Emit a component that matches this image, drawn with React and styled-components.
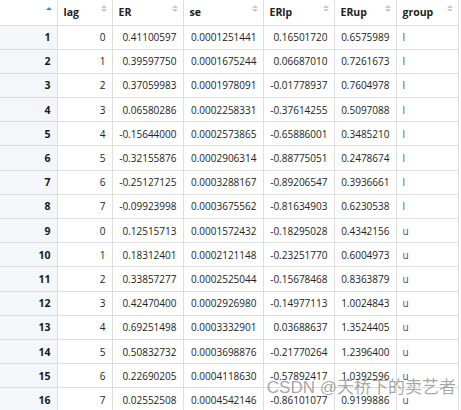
import React from 'react'
import styled, { createGlobalStyle } from 'styled-components'

const GlobalStyle = createGlobalStyle`
  html, body {
    margin: 0;
    padding: 0;
    background: #ffffff;
  }
  body {
    font-family: 'Open Sans', 'Noto Sans', sans-serif;
  }
`

const rows = [
  [1, 0, '0.41100597', '0.0001251441', '0.16501720', '0.6575989', 'l'],
  [2, 1, '0.39597750', '0.0001675244', '0.06687010', '0.7261673', 'l'],
  [3, 2, '0.37059983', '0.0001978091', '-0.01778937', '0.7604978', 'l'],
  [4, 3, '0.06580286', '0.0002258331', '-0.37614255', '0.5097088', 'l'],
  [5, 4, '-0.15644000', '0.0002573865', '-0.65886001', '0.3485210', 'l'],
  [6, 5, '-0.32155876', '0.0002906314', '-0.88775051', '0.2478674', 'l'],
  [7, 6, '-0.25127125', '0.0003288167', '-0.89206547', '0.3936661', 'l'],
  [8, 7, '-0.09923998', '0.0003675562', '-0.81634903', '0.6230538', 'l'],
  [9, 0, '0.12515713', '0.0001572432', '-0.18295028', '0.4342156', 'u'],
  [10, 1, '0.18312401', '0.0002121148', '-0.23251770', '0.6004973', 'u'],
  [11, 2, '0.33857277', '0.0002525044', '-0.15678468', '0.8363879', 'u'],
  [12, 3, '0.42470400', '0.0002926980', '-0.14977113', '1.0024843', 'u'],
  [13, 4, '0.69251498', '0.0003332901', '0.03688637', '1.3524405', 'u'],
  [14, 5, '0.50832732', '0.0003698876', '-0.21770264', '1.2396400', 'u'],
  [15, 6, '0.22690205', '0.0004118630', '-0.57892417', '1.0392596', 'u'],
  [16, 7, '0.02552508', '0.0004542146', '-0.86101077', '0.9199886', 'u'],
]

const columns = [
  { name: 'lag', width: 55 },
  { name: 'ER', width: 71 },
  { name: 'se', width: 80 },
  { name: 'ERlp', width: 71 },
  { name: 'ERup', width: 62 },
  { name: 'group', width: 62 },
]

const Viewer = styled.div`
  position: relative;
  width: 461px;
  height: 410px;
  overflow: hidden;
  background: #ffffff;
`

const Table = styled.table`
  border-collapse: collapse;
  table-layout: fixed;
  width: 458px;
  font-size: 10px;
  color: #222;
`

const HeadCell = styled.th`
  position: relative;
  height: 25px;
  padding: 0 6px;
  text-align: left;
  font-weight: 700;
  font-size: 10.5px;
  color: #222;
  background: #ffffff;
  border: 1px solid #dedede;
  border-top: none;
  border-left: ${(p) => (p.$first ? 'none' : '1px solid #dedede')};
  box-sizing: border-box;
`

const SortIcon = styled.span`
  position: absolute;
  top: ${(p) => (p.$active ? '7px' : '5px')};
  right: 5px;
  display: flex;
  flex-direction: column;
  gap: 1px;
`

const Tri = styled.span`
  width: 0;
  height: 0;
  border-left: 3.5px solid transparent;
  border-right: 3.5px solid transparent;
  ${(p) =>
    p.$down
      ? `border-top: 3.5px solid ${p.$color};`
      : `border-bottom: 3.5px solid ${p.$color};`}
`

const Row = styled.tr`
  height: 24.2px;
`

const IndexCell = styled.td`
  padding: 0 6px;
  text-align: right;
  font-weight: 700;
  font-size: 10.5px;
  color: #1a1a1a;
  background: #f4f7f9;
  border: 1px solid #dedede;
  border-left: none;
`

const Cell = styled.td`
  padding: 0 6px;
  text-align: ${(p) => (p.$left ? 'left' : 'right')};
  white-space: nowrap;
  overflow: hidden;
  border: 1px solid #dedede;
  color: ${(p) => (p.$left ? '#4a4a8a' : '#222')};
`

const Watermark = styled.div`
  position: absolute;
  right: 5px;
  bottom: 12px;
  font-family: 'Liberation Sans', 'Noto Sans CJK SC', sans-serif;
  font-size: 17px;
  color: rgba(90, 90, 90, 0.55);
  pointer-events: none;
`

function SortArrows() {
  return (
    <SortIcon>
      <Tri $color="#c9c9c9" />
      <Tri $color="#c9c9c9" $down />
    </SortIcon>
  )
}

export default function App() {
  return (
    <Viewer>
      <GlobalStyle />
      <Table>
        <colgroup>
          <col style={{ width: 57 }} />
          {columns.map((c) => (
            <col key={c.name} style={{ width: c.width }} />
          ))}
        </colgroup>
        <thead>
          <tr>
            <HeadCell $first>
              <SortIcon $active>
                <Tri $color="#3a8ee0" />
              </SortIcon>
            </HeadCell>
            {columns.map((c) => (
              <HeadCell key={c.name}>
                {c.name}
                <SortArrows />
              </HeadCell>
            ))}
          </tr>
        </thead>
        <tbody>
          {rows.map((r) => (
            <Row key={r[0]}>
              <IndexCell>{r[0]}</IndexCell>
              {r.slice(1).map((v, i) => (
                <Cell key={i} $left={i === 5}>
                  {v}
                </Cell>
              ))}
            </Row>
          ))}
        </tbody>
      </Table>
      <Watermark>CSDN @天桥下的卖艺者</Watermark>
    </Viewer>
  )
}
